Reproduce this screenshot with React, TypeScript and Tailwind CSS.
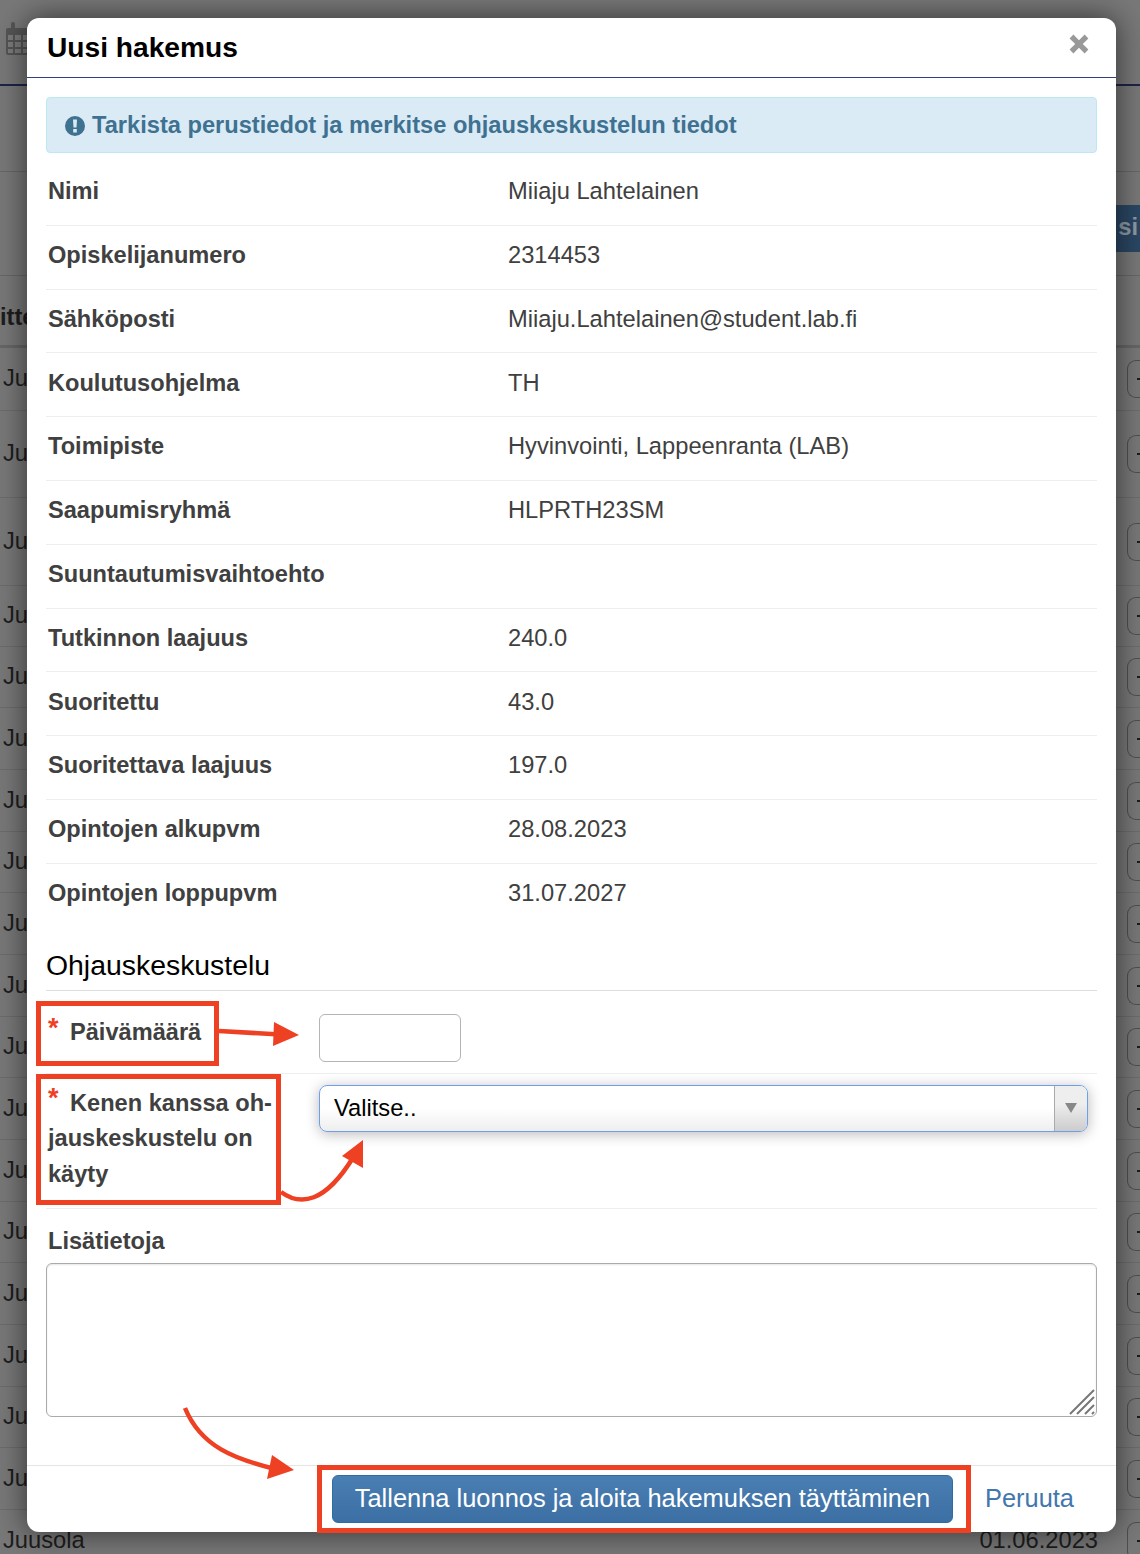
const bgRows = [63, 87, 88, 61, 61, 62, 62, 61, 62, 62, 61, 62, 62, 61, 62, 62, 61, 62]

const infoRows = [
  ['Nimi', 'Miiaju Lahtelainen'],
  ['Opiskelijanumero', '2314453'],
  ['Sähköposti', 'Miiaju.Lahtelainen@student.lab.fi'],
  ['Koulutusohjelma', 'TH'],
  ['Toimipiste', 'Hyvinvointi, Lappeenranta (LAB)'],
  ['Saapumisryhmä', 'HLPRTH23SM'],
  ['Suuntautumisvaihtoehto', ''],
  ['Tutkinnon laajuus', '240.0'],
  ['Suoritettu', '43.0'],
  ['Suoritettava laajuus', '197.0'],
  ['Opintojen alkupvm', '28.08.2023'],
  ['Opintojen loppupvm', '31.07.2027'],
]

function RowButton() {
  return (
    <span className="flex h-[38px] w-[13px] items-center justify-end rounded-l-[9px] border border-r-0 border-[#4f4f4f]">
      <span className="h-[2px] w-[3px] bg-[#1c1c1c]" />
    </span>
  )
}

function CalendarIcon() {
  return (
    <svg viewBox="0 0 32 33" className="h-[33px] w-[32px]">
      <path d="M2 6h28a2 2 0 0 1 2 2v23a2 2 0 0 1-2 2H2a2 2 0 0 1-2-2V8a2 2 0 0 1 2-2Z" fill="#555555" />
      <rect x="5" y="0" width="4" height="10" rx="2" fill="#555555" />
      <rect x="22" y="0" width="4" height="10" rx="2" fill="#555555" />
      <path
        d="M2 13h5v5H2zM9 13h6v5H9zM17 13h6v5h-6zM2 20h5v5H2zM9 20h6v5H9zM17 20h6v5h-6zM2 27h5v4H2zM9 27h6v4H9zM17 27h6v4h-6z"
        fill="#7c7c7c"
      />
    </svg>
  )
}

function Background() {
  return (
    <div className="text-[23.7px] text-[#1d1d1d]">
      <div className="h-[86px] border-b-2 border-[#1c2547] pl-[6px] pt-[22px]">
        <CalendarIcon />
      </div>
      <div className="h-[86px] border-b border-[#666666]" />
      <div className="flex h-[104px] items-center justify-end border-b border-[#666666] pt-[9px]">
        <div className="flex h-[47px] w-[60px] items-center justify-end rounded-l bg-[#2a4763] pr-[2px] font-bold text-[#8f9aa5]">
          si
        </div>
      </div>
      <div className="flex h-[72px] items-center border-b-[3px] border-[#666666] pt-[15px] font-bold">
        <span>itte</span>
      </div>
      {bgRows.map((h, i) => (
        <div
          key={i}
          className="flex items-center justify-between border-b border-[#6c6c6c] pl-[3px]"
          style={{ height: h }}
        >
          <span>Ju</span>
          <RowButton />
        </div>
      ))}
      <div className="flex h-[62px] items-center justify-between pl-[3px]">
        <span>Juusola</span>
        <div className="flex items-center gap-[29px]">
          <span>01.06.2023</span>
          <RowButton />
        </div>
      </div>
    </div>
  )
}

function Modal() {
  return (
    <div className="absolute left-[27px] top-[18px] flex h-[1514px] w-[1089px] flex-col rounded-[12px] bg-white shadow-[0_0_30px_rgba(0,0,0,0.6)]">
      <div className="flex h-[60px] items-center justify-between border-b border-[#33407a] pl-[20px] pr-[27px]">
        <h3 className="pt-[2px] text-[28.15px] font-bold leading-none text-black">Uusi hakemus</h3>
        <svg viewBox="0 0 20 20" className="mb-[7px] h-[20px] w-[20px] text-[#999999]" fill="currentColor">
          <path d="M4.4 0.6 10 6.2 15.6 0.6 19.4 4.4 13.8 10 19.4 15.6 15.6 19.4 10 13.8 4.4 19.4 0.6 15.6 6.2 10 0.6 4.4Z" />
        </svg>
      </div>

      <div className="flex-1 px-[19px] pt-[19px]">
        <div className="flex h-[56px] items-center gap-[7px] rounded-[4px] border border-[#bce8f1] bg-[#daebf6] pl-[18px] pt-[1px] text-[23.65px] font-bold text-[#3f7191]">
          <svg viewBox="0 0 20 20" className="h-[20px] w-[20px]">
            <circle cx="10" cy="10" r="10" fill="#3f7191" />
            <path d="M8 3.5h4l-.5 8h-3zM8.2 13h3.6v3.5H8.2z" fill="#daebf6" />
          </svg>
          <span className="leading-none">Tarkista perustiedot ja merkitse ohjauskeskustelun tiedot</span>
        </div>

        <div className="mt-[9px] text-[23.7px] text-[#404040]">
          {infoRows.map(([label, value], i) => (
            <div
              key={label}
              className={`flex h-[63.8px] items-center pb-[3px] pl-[2px] ${i < infoRows.length - 1 ? 'border-b border-[#eeeeee]' : ''}`}
            >
              <span className="w-[460px] text-[23.6px] font-bold">{label}</span>
              <span>{value}</span>
            </div>
          ))}
        </div>

        <div className="mt-[13px] flex h-[50px] items-center border-b border-[#dddddd] text-[28.4px] text-black">
          Ohjauskeskustelu
        </div>

        <div className="flex h-[83px] items-start border-b border-[#eeeeee] text-[23.6px] text-[#404040]">
          <label className="flex w-[273px] pl-[2px] pt-[24px] font-bold leading-[35.5px]">
            <span className="w-[22px] pt-[1px] text-[27px] leading-[25px] text-[#ee4023]">*</span>
            Päivämäärä
          </label>
          <div className="mt-[23px] h-[48px] w-[142px] rounded-[6px] border border-[#b4b4b4] bg-white" />
        </div>

        <div className="flex h-[135px] items-start border-b border-[#eeeeee] text-[23.6px] text-[#404040]">
          <label className="w-[273px] pl-[2px] pt-[12px] font-bold leading-[35.5px]">
            <span className="inline-block w-[22px] align-top text-[27px] leading-[25px] text-[#ee4023]">*</span>
            Kenen kanssa oh-
            <br />
            jauskeskustelu on
            <br />
            käyty
          </label>
          <div className="mt-[11px] flex h-[47px] w-[769px] items-stretch overflow-hidden rounded-[8px] border border-[#6f9fe8] bg-linear-to-b from-white from-50% to-[#eeeeee] shadow-[0_2px_14px_rgba(0,0,0,0.28)]">
            <span className="flex flex-1 items-center pl-[14px] pt-[2px] text-[23.7px] text-black">Valitse..</span>
            <span className="flex w-[33px] items-center justify-center border-l border-[#aaaaaa] bg-linear-to-b from-[#eeeeee] from-40% to-[#cccccc]">
              <span className="h-0 w-0 border-x-[6px] border-t-[10px] border-x-transparent border-t-[#888888]" />
            </span>
          </div>
        </div>

        <div className="pl-[2px] pt-[16px] text-[23.6px] font-bold leading-[32px] text-[#404040]">Lisätietoja</div>
        <div className="relative mt-[6px] h-[154px] rounded-[6px] border border-[#aaaaaa] shadow-[inset_0_1px_2px_rgba(0,0,0,0.1)]">
          <svg viewBox="0 0 26 26" className="absolute bottom-[1px] right-[1px] h-[26px] w-[26px]" stroke="#777777" strokeWidth="2">
            <path d="M1 25 25 1M8 25 25 8M16 25 25 16M23 25 25 23" />
          </svg>
        </div>
      </div>

      <div className="flex h-[67px] items-center border-t border-[#e5e5e5] pl-[305px]">
        <button className="h-[48px] w-[621px] rounded-[6px] border border-[#2e6da4] bg-linear-to-b from-[#4a7fb4] to-[#3c6fa3] pb-[2px] text-center text-[25.45px] text-white">
          Tallenna luonnos ja aloita hakemuksen täyttäminen
        </button>
        <span className="ml-[32px] pb-[2px] text-[25.4px] text-[#4277ad]">Peruuta</span>
      </div>
    </div>
  )
}

// annotations drawn on top of the screenshot
function Annotations() {
  return (
    <>
      <div className="absolute left-[36px] top-[1001px] h-[65px] w-[183px] border-[5px] border-[#ee4023]" />
      <div className="absolute left-[36px] top-[1074px] h-[131px] w-[245px] border-[5px] border-[#ee4023]" />
      <div className="absolute left-[317px] top-[1465px] h-[68px] w-[654px] border-[5px] border-[#ee4023]" />
      <svg className="absolute left-0 top-0 h-[1554px] w-[1140px]" viewBox="0 0 1140 1554" fill="none">
        <path d="M219 1031 280 1034.5" stroke="#ee4023" strokeWidth="4.5" />
        <path d="M274 1022 299 1035 273 1046Z" fill="#ee4023" />
        <path d="M281 1192C300 1206 325 1204 354 1156" stroke="#ee4023" strokeWidth="4.5" />
        <path d="M363 1140 342 1156 363 1168Z" fill="#ee4023" />
        <path d="M185 1408C201 1447 235 1459 275 1469" stroke="#ee4023" strokeWidth="4.5" />
        <path d="M294 1470 272 1455 267 1479Z" fill="#ee4023" />
      </svg>
    </>
  )
}

export default function App() {
  return (
    <div className="relative h-[1554px] w-[1140px] overflow-hidden bg-[#787878] font-['Liberation_Sans',Arial,sans-serif]">
      <Background />
      <Modal />
      <Annotations />
    </div>
  )
}
